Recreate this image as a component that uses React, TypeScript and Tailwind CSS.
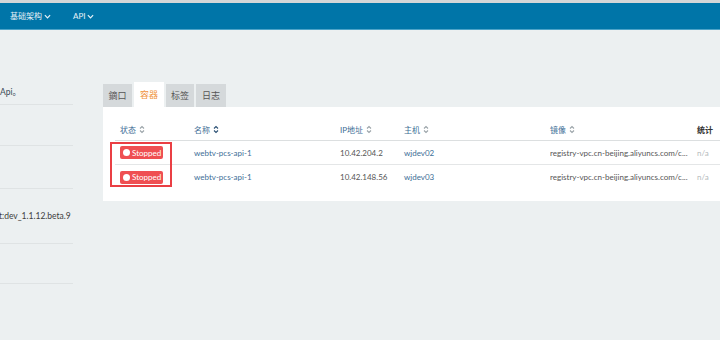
import React from "react";

const cols = "grid grid-cols-[74px_146px_64px_146px_147px_1fr] items-center pl-[5px]";

const rows = [
  { name: "webtv-pcs-api-1", ip: "10.42.204.2", host: "wjdev02" },
  { name: "webtv-pcs-api-1", ip: "10.42.148.56", host: "wjdev03" },
];

function Caret() {
  return (
    <svg width="7" height="5" viewBox="0 0 8 5" className="ml-[2px] inline-block">
      <path d="M1 1l3 3 3-3" fill="none" stroke="currentColor" strokeWidth="1.4" />
    </svg>
  );
}

function Sort({ active = false }: { active?: boolean }) {
  return (
    <svg width="6" height="9" viewBox="0 0 6 9" className="ml-[3px] inline-block">
      <path
        d="M1 3.5l2-2 2 2M1 5.5l2 2 2-2"
        fill="none"
        stroke={active ? "#2a4f73" : "#9aa3a8"}
        strokeWidth="1.1"
      />
    </svg>
  );
}

function Badge() {
  return (
    <span className="inline-flex h-[13px] w-[43px] items-center gap-[2px] rounded-[2px] bg-[#ef4f52] pl-[3px] text-[8px] leading-none text-white">
      <span className="h-[7px] w-[7px] rounded-full bg-white" />
      Stopped
    </span>
  );
}

export default function App() {
  return (
    <div className="h-[340px] w-[720px] overflow-hidden bg-[#ecf0f1] font-['Lato','Noto_Sans_CJK_SC',sans-serif] text-[8px] text-[#3d3d3d]">
      <div className="h-[3px] bg-[#d4d6d7]" />
      <header className="flex h-[27px] items-center border-b border-[#4da3c8] bg-[#0075a8] text-[8px] text-[#e6f1f7]">
        <span className="ml-[10px] flex items-center">
          基础架构
          <Caret />
        </span>
        <span className="ml-[22px] flex items-center">
          API
          <Caret />
        </span>
      </header>

      <div className="flex">
        <aside className="w-[73px] shrink-0 text-[8.5px]">
          <div className="flex h-[75px] items-end border-b border-[#dfe3e4] pb-[5px] text-[#3a4a57]">
            Api。
          </div>
          <div className="h-[41px] border-b border-[#dfe3e4]" />
          <div className="h-[43px] border-b border-[#dfe3e4]" />
          <div className="flex h-[55px] items-center overflow-hidden border-b border-[#dfe3e4] whitespace-nowrap">
            <span className="-ml-[1px]">t:dev_1.1.12.beta.9</span>
          </div>
          <div className="h-[40px] border-b border-[#dfe3e4]" />
        </aside>

        <main className="ml-[30px] flex-1 pt-[52px]">
          <div className="flex items-end gap-[2px] text-[9px]">
            <div className="flex h-[23px] w-[29px] items-center justify-center bg-[#d5d9db] text-[#555]">鏑口</div>
            <div className="flex h-[25px] w-[30px] items-center justify-center bg-white pt-[1px] text-[#f0923a]">容器</div>
            <div className="flex h-[23px] w-[28px] items-center justify-center bg-[#d5d9db] text-[#555]">标签</div>
            <div className="flex h-[23px] w-[30px] items-center justify-center bg-[#d5d9db] text-[#555]">日志</div>
          </div>

          <div className="h-[94px] bg-white pl-[12px] pt-[12px]">
            <div className={`${cols} h-[22px] border-b border-[#dcdfe0] text-[#3d6e96]`}>
              <span className="flex items-center">状态<Sort /></span>
              <span className="flex items-center">名称<Sort active /></span>
              <span className="flex items-center">IP地址<Sort /></span>
              <span className="flex items-center">主机<Sort /></span>
              <span className="flex items-center">镜像<Sort /></span>
              <span className="font-bold text-[#333]">统计</span>
            </div>
            <div className="relative">
              {rows.map((r, i) => (
                <div
                  key={i}
                  className={`${cols} h-[24px] ${i === 0 ? "border-b border-[#e4e6e7]" : ""}`}
                >
                  <span>
                    <Badge />
                  </span>
                  <span className="text-[#3d6e96]">{r.name}</span>
                  <span className="text-[#555]">{r.ip}</span>
                  <span className="text-[#3d6e96]">{r.host}</span>
                  <span className="overflow-hidden whitespace-nowrap text-[#555]">registry-vpc.cn-beijing.aliyuncs.com/c...</span>
                  <span className="text-[#b5b9bb]">n/a</span>
                </div>
              ))}
              <div className="absolute left-[-5px] top-[1px] h-[45px] w-[62px] border-2 border-[#ea3f44]" />
            </div>
          </div>
        </main>
      </div>
    </div>
  );
}
